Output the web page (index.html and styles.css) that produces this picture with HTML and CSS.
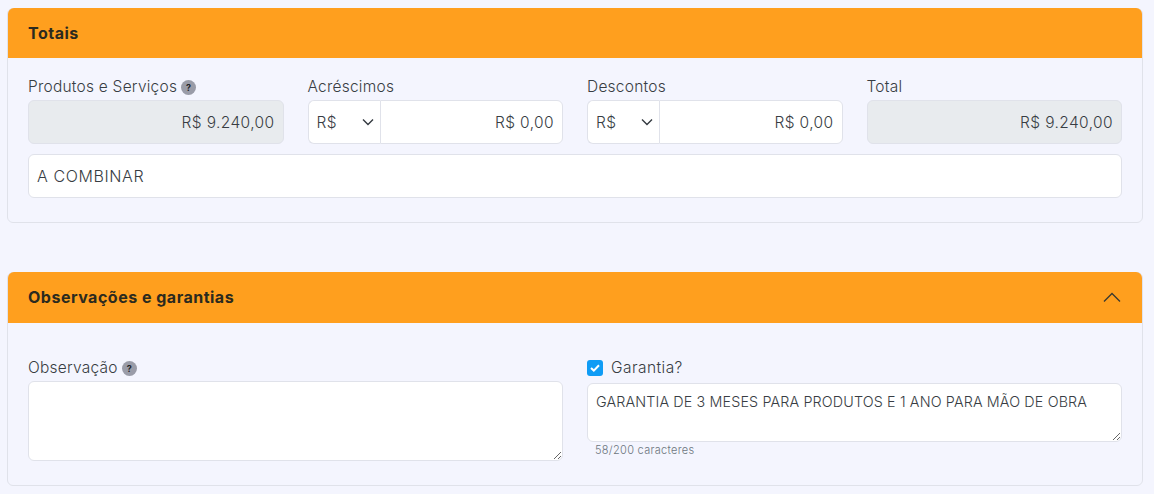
FILE: index.html
```html
<!DOCTYPE html>
<html lang="pt-BR">
<head>
  <meta charset="UTF-8">
  <meta name="viewport" content="width=device-width, initial-scale=1.0">
  <title>Totais</title>
  <link rel="stylesheet" href="styles.css">
</head>
<body>
  <section class="card card-totals">
    <div class="card-header">
      <h2>Totais</h2>
    </div>
    <div class="card-body">
      <div class="totals-row">
        <div class="field">
          <label>Produtos e Serviços <span class="help">?</span></label>
          <input class="control readonly" type="text" value="R$ 9.240,00" readonly>
        </div>
        <div class="field">
          <label>Acréscimos</label>
          <div class="input-group">
            <select class="unit"><option>R$</option><option>%</option></select>
            <input class="control" type="text" value="R$ 0,00">
          </div>
        </div>
        <div class="field">
          <label>Descontos</label>
          <div class="input-group">
            <select class="unit"><option>R$</option><option>%</option></select>
            <input class="control" type="text" value="R$ 0,00">
          </div>
        </div>
        <div class="field">
          <label>Total</label>
          <input class="control readonly" type="text" value="R$ 9.240,00" readonly>
        </div>
      </div>
      <input class="control payment" type="text" value="A COMBINAR">
    </div>
  </section>

  <section class="card card-notes">
    <div class="card-header">
      <h2>Observações e garantias</h2>
      <svg class="collapse-icon" width="18" height="10" viewBox="0 0 18 10" fill="none" stroke="#3a3a30" stroke-width="1.3">
        <path d="M1 9.5 9 1.5l8 8"/>
      </svg>
    </div>
    <div class="card-body notes-body">
      <div class="field">
        <label class="notes-label">Observação <span class="help">?</span></label>
        <textarea class="control obs"></textarea>
      </div>
      <div class="field">
        <label class="check-label">
          <span class="checkbox">
            <svg width="10" height="8" viewBox="0 0 10 8" fill="none" stroke="#fff" stroke-width="2"><path d="M1 4l2.8 2.6L9 1.2"/></svg>
          </span>
          Garantia?
        </label>
        <textarea class="control warranty">GARANTIA DE 3 MESES PARA PRODUTOS E 1 ANO PARA MÃO DE OBRA</textarea>
        <small class="counter">58/200 caracteres</small>
      </div>
    </div>
  </section>
</body>
</html>
```

FILE: styles.css
```css
html, body {
  height: 100%;
}
body {
  margin: 0;
  padding: 8px 11px 0 7px;
  background-color: #f4f5fe;
  font-family: "Inter", "Open Sans", sans-serif;
  font-size: 15.5px;
  font-weight: 300;
  letter-spacing: 0.23px;
  color: #383d43;
  overflow: hidden;
}
.card {
  border: 1px solid #e0e2ea;
  border-radius: 6px;
  box-sizing: border-box;
  height: 215px;
}
.card-notes {
  margin-top: 49px;
  height: 214px;
}
.card-header {
  margin-top: -1px;
  height: 50px;
  padding: 0 21px 0 20px;
  background-color: #ff9f1e;
  border-radius: 6px 6px 0 0;
  display: flex;
  align-items: center;
  justify-content: space-between;
}
.card-notes .card-header {
  height: 51px;
  padding-bottom: 1px;
  box-sizing: border-box;
}
.card-header h2 {
  margin: 0;
  font-size: 16px;
  font-weight: 700;
  letter-spacing: 0.5px;
  color: #2b2a1f;
}
.card-body {
  padding: 20px 20px 0;
}
.totals-row {
  display: grid;
  grid-template-columns: repeat(4, 1fr);
  gap: 24px;
}
.field {
  min-width: 0;
}
.field label {
  display: flex;
  align-items: center;
  gap: 4px;
  height: 22px;
  line-height: 18px;
  padding-bottom: 4px;
  box-sizing: border-box;
}
.help {
  width: 15px;
  height: 15px;
  border-radius: 50%;
  background-color: #9a9ca8;
  color: #22252a;
  font-size: 9px;
  font-weight: 700;
  letter-spacing: 0;
  line-height: 15px;
  text-align: center;
}
.control {
  display: block;
  width: 100%;
  height: 44px;
  box-sizing: border-box;
  padding: 0 8px;
  border: 1px solid #e0e2ea;
  border-radius: 6px;
  background-color: #fff;
  font: inherit;
  letter-spacing: inherit;
  color: #383d43;
  outline: none;
}
.field > .control,
.input-group .control {
  text-align: right;
  letter-spacing: 0.4px;
}
.readonly {
  background-color: #e8ebee;
}
.input-group {
  display: flex;
}
.unit {
  flex: 0 0 72px;
  height: 44px;
  padding: 0 8px;
  border: 1px solid #e0e2ea;
  border-right: 0;
  border-radius: 6px 0 0 6px;
  font: inherit;
  letter-spacing: 0.4px;
  color: #383d43;
  appearance: none;
  background: #fff url("data:image/svg+xml,%3Csvg xmlns='http://www.w3.org/2000/svg' viewBox='0 0 12 8'%3E%3Cpath d='M1 1.5l5 5 5-5' fill='none' stroke='%23343a40' stroke-width='1.4'/%3E%3C/svg%3E") no-repeat right 6px center / 12px 8px;
}
.input-group .control {
  flex: 1;
  min-width: 0;
  border-radius: 0 6px 6px 0;
}
.payment {
  margin-top: 10px;
  font-size: 16px;
  letter-spacing: 0.6px;
}
.notes-body {
  display: grid;
  grid-template-columns: 1fr 1fr;
  gap: 24px;
  padding-top: 36px;
}
.field > textarea.control {
  text-align: left;
  resize: vertical;
  padding: 9px 8px;
}
.obs {
  height: 80px;
}
.field > textarea.warranty {
  height: 59px;
  font-size: 14.3px;
  letter-spacing: 0.15px;
}
.field .check-label {
  gap: 8px;
  height: 24px;
  padding: 0 0 6px;
  letter-spacing: 0.45px;
}
.checkbox {
  width: 16px;
  height: 16px;
  border-radius: 3px;
  background-color: #0f9cf5;
  display: flex;
  align-items: center;
  justify-content: center;
}
.counter {
  display: block;
  margin: 1px 0 0 8px;
  font-size: 11px;
  line-height: 14px;
  letter-spacing: 0.3px;
  color: #6c757d;
}
```
